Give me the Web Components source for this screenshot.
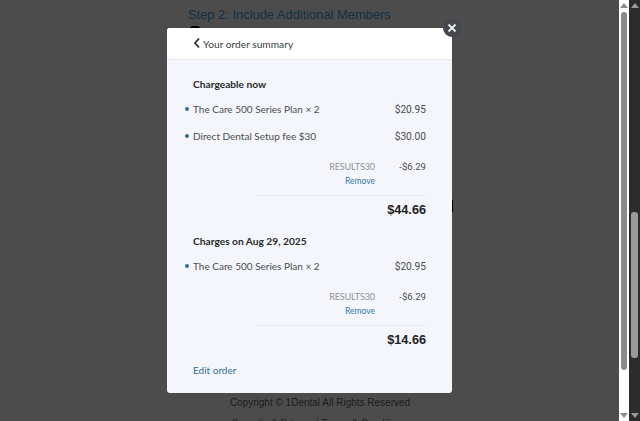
<!DOCTYPE html>
<html>
<head>
<meta charset="utf-8">
<title>Order summary</title>
<style>
html, body { margin: 0; height: 100%; overflow: hidden; }
body { font-family: Lato, sans-serif; }
</style>
</head>
<body>
<checkout-page>
  <order-modal>
    <summary-section title="Chargeable now" total="$44.66">
      <line-item price="$20.95">The Care 500 Series Plan × 2</line-item>
      <line-item price="$30.00">Direct Dental Setup fee $30</line-item>
      <promo-row code="RESULTS30" amount="-$6.29"></promo-row>
    </summary-section>
    <summary-section title="Charges on Aug 29, 2025" total="$14.66">
      <line-item price="$20.95">The Care 500 Series Plan × 2</line-item>
      <promo-row code="RESULTS30" amount="-$6.29"></promo-row>
    </summary-section>
  </order-modal>
</checkout-page>
<script>
class CheckoutPage extends HTMLElement {
    constructor() {
        super();
        this.attachShadow({mode: 'open'});
    }
    connectedCallback() {
        this.shadowRoot.innerHTML = `
        <style>
            :host { display: block; width: 640px; height: 421px; position: relative; overflow: hidden; background: #fff; }
            .page { position: absolute; inset: 0 21px 0 0; font-family: "Liberation Sans", Arial, sans-serif; color: #1d3f5c; }
            h2 { margin: 0; position: absolute; left: 188px; top: 6px; font-size: 12.9px; font-weight: 400; line-height: 17px; color: #3f9fe8; white-space: nowrap; }
            .blot { position: absolute; left: 190px; top: 26px; width: 10px; height: 6px; border-radius: 5px; background: #000; }
            .blot2 { position: absolute; left: 449px; top: 199px; width: 4px; height: 14px; border-radius: 2px; background: #000; }
            .copy { position: absolute; left: 0; width: 640px; top: 396px; text-align: center; font-size: 10px; color: #666; line-height: 14px; }
            .links { position: absolute; left: 0; width: 640px; top: 417px; text-align: center; font-size: 10px; color: #666; line-height: 14px; }
            .backdrop { position: absolute; inset: 0; background: rgba(0,0,0,.7); }
            .modal-wrap { position: absolute; left: 167px; top: 28px; }
            .inner-bar { position: absolute; left: 619px; top: 0; bottom: 0; width: 10px; background: #fff; }
            .outer-bar { position: absolute; left: 629px; top: 0; bottom: 0; width: 11px; background: #2c2c2c; }
            .thumb { position: absolute; left: 2px; width: 6px; border-radius: 3px; background: #8a8a8a; top: 12px; height: 358px; }
            .outer-bar .thumb { left: 2px; width: 7px; top: 212px; height: 146px; background: #9a9a9a; }
            .arrow { position: absolute; left: 1px; width: 0; height: 0; border-left: 4px solid transparent; border-right: 4px solid transparent; }
            .up { top: 3px; border-bottom: 5px solid #8a8a8a; }
            .down { bottom: 3px; border-top: 5px solid #8a8a8a; }
            .outer-bar .arrow { left: 1.5px; }
            .outer-bar .up { border-bottom-color: #9a9a9a; }
            .outer-bar .down { border-top-color: #9a9a9a; }
        </style>
        <div class="page">
            <h2>Step 2: Include Additional Members</h2>
            <div class="blot"></div>
            <div class="blot2"></div>
            <div class="copy">Copyright © 1Dental All Rights Reserved</div>
            <div class="links">Security &amp; Privacy | Terms &amp; Conditions</div>
        </div>
        <div class="backdrop"></div>
        <div class="modal-wrap"><slot></slot></div>
        <div class="inner-bar"><div class="arrow up"></div><div class="thumb"></div><div class="arrow down"></div></div>
        <div class="outer-bar"><div class="arrow up"></div><div class="thumb"></div><div class="arrow down"></div></div>
        `;
    }
}

class OrderModal extends HTMLElement {
    constructor() {
        super();
        this.attachShadow({mode: 'open'});
    }
    connectedCallback() {
        this.shadowRoot.innerHTML = `
        <style>
            :host { display: block; width: 285px; height: 365px; position: relative; background: #f5f6fb; border-radius: 3px; font-family: Lato, sans-serif; }
            header { height: 31px; background: #fff; border-bottom: 1px solid #e6e7ea; border-radius: 3px 3px 0 0; display: flex; align-items: center; padding-left: 26px; gap: 2px; font-size: 10.2px; color: #3a3d40; }
            header svg { display: block; margin-top: -2px; }
            main { padding: 16px 26px 0 26px; }
            a { display: block; margin-top: 14px; font-size: 10px; line-height: 14px; color: #2f6f96; }
            .close { position: absolute; right: -9px; top: -9px; width: 18px; height: 18px; border-radius: 50%; background: #44474c; display: flex; align-items: center; justify-content: center; }
        </style>
        <header>
            <svg width="8" height="12" viewBox="0 0 8 12"><path d="M6 1.5 L2 6 L6 10.5" fill="none" stroke="#2c2f33" stroke-width="1.8"/></svg>
            <span>Your order summary</span>
        </header>
        <main>
            <slot></slot>
            <a>Edit order</a>
        </main>
        <div class="close"><svg width="10" height="10" viewBox="0 0 10 10"><path d="M1.5 1.5 L8.5 8.5 M8.5 1.5 L1.5 8.5" stroke="#e8e8e8" stroke-width="2" fill="none"/></svg></div>
        `;
    }
}

class SummarySection extends HTMLElement {
    constructor() {
        super();
        this.attachShadow({mode: 'open'});
    }
    connectedCallback() {
        this.shadowRoot.innerHTML = `
        <style>
            :host { display: block; margin-bottom: 15px; }
            h3 { margin: 0 0 3px; font-size: 10.2px; line-height: 16px; font-weight: 700; color: #26292c; }
            .total { border-top: 1px solid #e8e9ed; margin-left: 63px; margin-top: 7px; padding-top: 7px; text-align: right; font-family: "Liberation Sans", Arial, sans-serif; font-weight: 700; font-size: 12.7px; line-height: 15px; color: #1f2225; }
        </style>
        <h3>${this.getAttribute('title')}</h3>
        <slot></slot>
        <div class="total">${this.getAttribute('total')}</div>
        `;
    }
}

class LineItem extends HTMLElement {
    constructor() {
        super();
        this.attachShadow({mode: 'open'});
    }
    connectedCallback() {
        this.shadowRoot.innerHTML = `
        <style>
            :host { display: flex; justify-content: space-between; align-items: center; height: 27px; position: relative; font-size: 10px; color: #4a4d50; }
            :host::before { content: ""; position: absolute; left: -8px; top: 11.5px; width: 4px; height: 4px; border-radius: 50%; background: #2f6f96; }
            .price { font-size: 10.2px; font-family: Roboto, sans-serif; padding-top: 2px; }
        </style>
        <span><slot></slot></span>
        <span class="price">${this.getAttribute('price')}</span>
        `;
    }
}

class PromoRow extends HTMLElement {
    constructor() {
        super();
        this.attachShadow({mode: 'open'});
    }
    connectedCallback() {
        this.shadowRoot.innerHTML = `
        <style>
            :host { display: grid; grid-template-columns: 1fr 51px; padding-top: 11px; font-size: 9.6px; line-height: 14px; color: #4a4d50; font-family: Roboto, sans-serif; }
            .code { text-align: right; color: #8f9194; font-size: 9px; letter-spacing: -.1px; font-family: Lato, sans-serif; }
            .remove { display: block; font-size: 8.5px; line-height: 14px; letter-spacing: 0; color: #2f7aa5; }
            .amount { text-align: right; }
        </style>
        <div class="code">RESULTS30<span class="remove">Remove</span></div>
        <div class="amount">${this.getAttribute('amount')}</div>
        `;
    }
}

customElements.define('checkout-page', CheckoutPage);
customElements.define('order-modal', OrderModal);
customElements.define('summary-section', SummarySection);
customElements.define('line-item', LineItem);
customElements.define('promo-row', PromoRow);
</script>
</body>
</html>
